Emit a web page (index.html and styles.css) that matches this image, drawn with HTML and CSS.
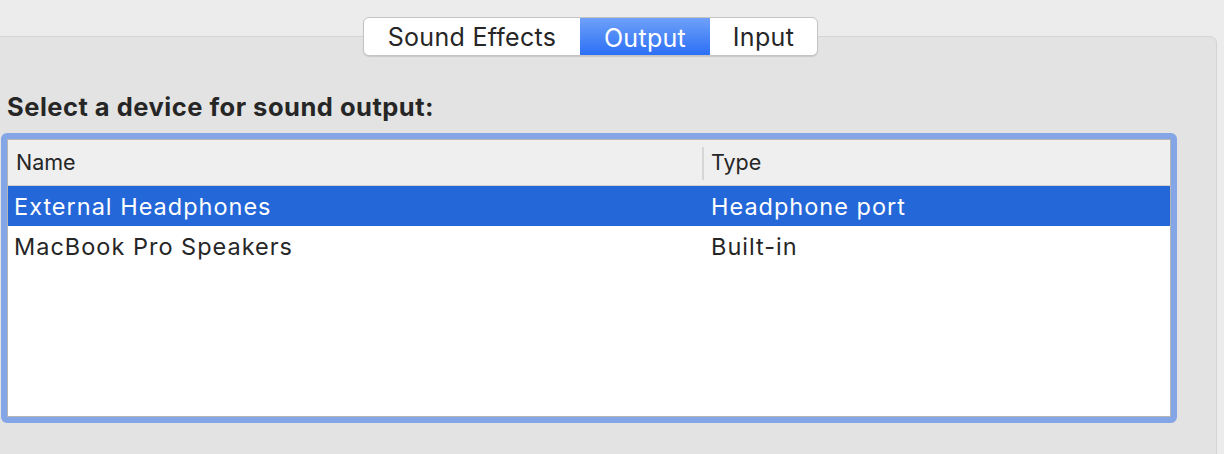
FILE: index.html
```html
<!DOCTYPE html>
<html lang="en">
<head>
<meta charset="utf-8">
<title>Sound – Output</title>
<link rel="stylesheet" href="styles.css">
</head>
<body>
<div class="window">
  <div class="tabs">
    <div class="segmented">
      <div class="seg seg-effects">Sound Effects</div>
      <div class="seg seg-output is-active">Output</div>
      <div class="seg seg-input">Input</div>
    </div>
  </div>
  <div class="panel">
    <h1 class="title">Select a device for sound output:</h1>
    <div class="focus-ring">
      <div class="table">
        <div class="thead">
          <div class="th">Name</div>
          <div class="th th-type">Type</div>
        </div>
        <div class="row is-selected">
          <div class="td">External Headphones</div>
          <div class="td td-type">Headphone port</div>
        </div>
        <div class="row">
          <div class="td">MacBook Pro Speakers</div>
          <div class="td td-type">Built-in</div>
        </div>
      </div>
    </div>
  </div>
</div>
</body>
</html>
```
FILE: styles.css
```css
html, body {
  margin: 0;
  padding: 0;
}

body {
  background: #ececec;
  font-family: Inter, "Liberation Sans", sans-serif;
  color: #262626;
  width: 1224px;
  height: 454px;
  overflow: hidden;
}

.window {
  margin-left: -36px;
  width: 1253px;
}

.tabs {
  padding-top: 17px;
  display: flex;
  justify-content: center;
  position: relative;
  z-index: 1;
}

.segmented {
  display: flex;
  height: 39px;
  box-sizing: border-box;
  background: #ffffff;
  border: 1px solid #c4c4c4;
  border-radius: 6px;
  box-shadow: 0 1px 1px rgba(0, 0, 0, 0.12);
  overflow: hidden;
}

.seg {
  display: flex;
  align-items: center;
  justify-content: center;
  box-sizing: border-box;
  padding-top: 2px;
  font-size: 25px;
  letter-spacing: 0.3px;
  color: #262626;
  line-height: 35px;
}

.seg-effects { width: 216px; }
.seg-output  { width: 130px; }
.seg-input   { width: 107px; }

.seg.is-active {
  color: #ffffff;
  background: linear-gradient(#70a2f8, #2a6ef6);
  margin: -1px 0;
  height: 39px;
  padding-top: 3px;
}

.panel {
  margin-top: -20px;
  background: #e3e3e3;
  border: 1px solid #d5d5d5;
  border-radius: 0 7px 0 0;
  padding: 55px 0 0 42px;
  height: 420px;
  box-sizing: border-box;
}

.title {
  margin: 0;
  font-size: 25.5px;
  line-height: 30px;
  font-weight: 700;
  letter-spacing: 0.5px;
  color: #262626;
}

.focus-ring {
  margin: 11px 0 0 -6px;
  width: 1176px;
  box-sizing: border-box;
  border: 6px solid #84a6e7;
  border-radius: 6px;
}

.table {
  background: #ffffff;
  border: 1px solid #b5b5b5;
  height: 278px;
  box-sizing: border-box;
}

.thead {
  display: grid;
  grid-template-columns: 695px 1fr;
  height: 46px;
  box-sizing: border-box;
  background: #efefef;
  border-bottom: 1px solid #d0d0d0;
}

.th {
  font-size: 21.5px;
  line-height: 45px;
  padding-left: 8px;
  color: #262626;
}

.th-type {
  position: relative;
}

.th-type::before {
  content: "";
  position: absolute;
  left: -1px;
  top: 7px;
  width: 2px;
  height: 33px;
  background: #d6d6d6;
}

.row {
  display: grid;
  grid-template-columns: 695px 1fr;
  height: 40px;
}

.td {
  font-size: 23.5px;
  letter-spacing: 1px;
  line-height: 38px;
  padding: 2px 0 0 6px;
  white-space: nowrap;
  color: #262626;
}

.td-type {
  padding-left: 8px;
}

.row.is-selected {
  background: #2467d9;
}

.row.is-selected .td {
  color: #ffffff;
}
```
